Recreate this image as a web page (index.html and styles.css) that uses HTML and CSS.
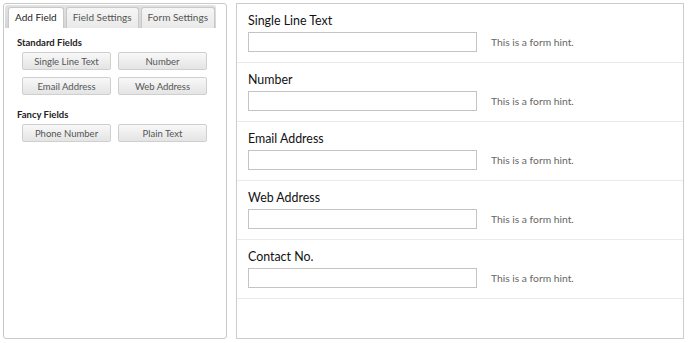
FILE: index.html
```html
<!DOCTYPE html>
<html>
<head>
<meta charset="utf-8">
<link rel="stylesheet" href="styles.css">
</head>
<body>
<div class="page">
  <aside class="sidebar">
    <ul class="tabs">
      <li class="tab active">Add Field</li>
      <li class="tab">Field Settings</li>
      <li class="tab">Form Settings</li>
    </ul>
    <div class="group">
      <h3 class="group-title">Standard Fields</h3>
      <div class="btn-grid">
        <button class="field-btn">Single Line Text</button>
        <button class="field-btn">Number</button>
        <button class="field-btn">Email Address</button>
        <button class="field-btn">Web Address</button>
      </div>
    </div>
    <div class="group">
      <h3 class="group-title">Fancy Fields</h3>
      <div class="btn-grid">
        <button class="field-btn">Phone Number</button>
        <button class="field-btn">Plain Text</button>
      </div>
    </div>
  </aside>
  <main class="form">
    <div class="field">
      <label class="label">Single Line Text</label>
      <div class="row"><input class="input" type="text"><span class="hint">This is a form hint.</span></div>
    </div>
    <div class="field">
      <label class="label">Number</label>
      <div class="row"><input class="input" type="text"><span class="hint">This is a form hint.</span></div>
    </div>
    <div class="field">
      <label class="label">Email Address</label>
      <div class="row"><input class="input" type="text"><span class="hint">This is a form hint.</span></div>
    </div>
    <div class="field">
      <label class="label">Web Address</label>
      <div class="row"><input class="input" type="text"><span class="hint">This is a form hint.</span></div>
    </div>
    <div class="field">
      <label class="label">Contact No.</label>
      <div class="row"><input class="input" type="text"><span class="hint">This is a form hint.</span></div>
    </div>
  </main>
</div>
</body>
</html>
```

FILE: styles.css
```css
* { box-sizing: border-box; }
html, body { margin: 0; padding: 0; background: #fff; }
body { font-family: Lato, "Open Sans", sans-serif; color: #222; }

.page {
  display: flex;
  gap: 9px;
  padding: 3px 5px 4px 3px;
  height: 343px;
}

.sidebar {
  width: 224px;
  flex: none;
  border: 1px solid #c9c9c9;
  border-radius: 3px;
  padding: 1px 10px 0 1px;
}

.tabs {
  list-style: none;
  margin: 0;
  padding: 2px 0 0 3px;
  height: 23px;
  display: flex;
  gap: 2px;
  background: linear-gradient(#e2e2e2, #d4d4d4);
  border-radius: 3px 3px 0 0;
}

.tab {
  flex: none;
  white-space: nowrap;
  height: 21px;
  padding: 0 6px;
  font-size: 10px;
  line-height: 19px;
  color: #555;
  background: linear-gradient(#f6f6f6, #e9e9e9);
  border: 1px solid #c8c8c8;
  border-bottom: none;
  border-radius: 3px 3px 0 0;
}
.tab.active {
  background: #fff;
  color: #222;
}

.group { padding: 8px 0 0 11px; }
.group + .group { padding-top: 13px; }

.group-title {
  margin: 0 0 3px 1px;
  font-size: 9.5px;
  font-weight: 700;
  line-height: 13px;
  color: #222;
}

.btn-grid {
  display: grid;
  grid-template-columns: 89px 89px;
  gap: 7px;
  padding-left: 6px;
}

.field-btn {
  height: 18px;
  padding: 0;
  font-family: inherit;
  font-size: 9.5px;
  color: #555;
  background: linear-gradient(#f8f8f8, #e4e4e4);
  border: 1px solid #cfcfcf;
  border-radius: 2px;
}

.form {
  flex: 1;
  border: 1px solid #cccccc;
}

.field {
  padding: 9px 11px 10px;
  border-bottom: 1px solid #eaeaea;
}

.label {
  display: block;
  font-size: 12.4px;
  line-height: 16px;
  color: #111;
  margin-bottom: 3px;
}

.row {
  display: flex;
  align-items: center;
  gap: 14px;
}

.input {
  width: 229px;
  height: 20px;
  margin: 0;
  border: 1px solid #c4c4c4;
  background: #fff;
}

.hint {
  font-size: 10.3px;
  color: #666;
}
```
